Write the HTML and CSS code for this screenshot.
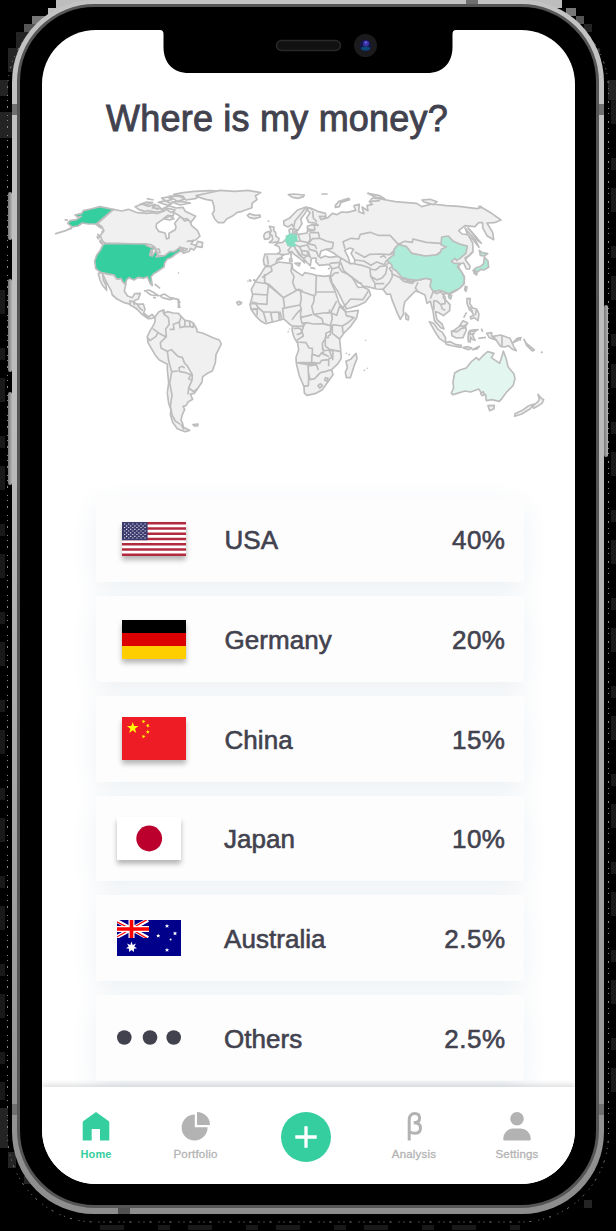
FILE: index.html
```html
<!DOCTYPE html>
<html lang="en">
<head>
<meta charset="utf-8">
<title>Where is my money?</title>
<link rel="stylesheet" href="styles.css">
</head>
<body>
<svg class="backdrop" viewBox="0 0 616 1231" aria-hidden="true">
  <g><path fill="#bdbdbd" d="M56 0h506v8H56zM48 8h20v8H48z"/><path d="M32 16h16v8H32zM566 8h10v8h-10z" fill="#777"/><path d="M24 24h16v8H24zM576 16h8v8h-8z" fill="#555"/></g>
  <path d="M16 32h16v16H16zM8 48h12v24H8zM0 80h8v16H0zM0 112h12v26H0zM584 24h8v8h-8zM592 48h8v20h-8zM608 80h8v20h-8zM0 1108h8v40H0zM8 1152h8v16H8zM24 1176h16v8H24zM584 1200h8v8h-8z" fill="#242424"/>
  <rect x="7.5" y="3" width="601" height="1219" rx="88" fill="none" stroke="#888" stroke-width="1" stroke-dasharray="1 4 1 7 2 5"/>
  <path d="M2.500 290V1100M613.500 100V1100M100 1227.500H520" stroke="#191919" stroke-width="5" stroke-dasharray="24 34 12 18"/>
</svg>
<div class="phone">
  <i class="button mute"></i><i class="button up"></i><i class="button down"></i><i class="button power"></i>
  <i class="antenna a1"></i><i class="antenna a2"></i><i class="antenna a3"></i><i class="antenna a4"></i><i class="antenna a5"></i><i class="antenna a6"></i>
  <div class="bezel">
    <main class="screen">
      <svg class="notch" viewBox="0 0 296 44" aria-hidden="true">
        <path d="M0 0H296Q292.500 0 292.500 4V17C292.500 33 283 43 267 43H29C13 43 3.500 33 3.500 17V4Q3.500 0 0 0Z"/>
        <rect x="116.500" y="10.500" width="64" height="10" rx="5" fill="#111" stroke="#292929" stroke-width="1.500"/>
        <circle cx="205.500" cy="15.500" r="11.500" fill="#1b1b1d"/><circle cx="205.500" cy="15.500" r="6" fill="#14164a"/>
        <ellipse cx="205.500" cy="18.500" rx="4.500" ry="2" fill="#0c4a78"/><circle cx="206" cy="13.500" r="3" fill="#3a34a8"/><circle cx="206" cy="12.500" r="1" fill="#7474dc"/>
      </svg>
      <h1>Where is my money?</h1>
      <svg class="map" viewBox="42 180 533 270" role="img" aria-label="World map">
        <!-- North America -->
        <g transform="translate(50 180) scale(.33333)">
          <path d="M190 88L215 93 235 88 262 98 290 100 312 98 320 101 340 94 350 88 362 97 371 94 370 108 353 106 340 117 320 131 318 142 326 154 345 159 350 177 357 174 357 160 376 149 378 140 374 130 391 109 404 123 418 119 425 137 442 151 450 168 437 180 412 184 432 181 423 192 438 196 443 184 458 188 456 202 438 199 432 210 421 205 418 214 400 220 390 204 372 215 344 228 322 225 315 205 290 192 165 190 156 181 151 166 160 155 154 139 140 133Z"/>
          <path class="hot" d="M190 88L150 80 122 87 100 92 95 100 75 105 83 111 94 109 79 119 60 122 53 130 67 141 84 138 97 129 115 132 137 132 154 145 148 134 139 132Z"/>
          <path d="M66 142L49 151 30 157 17 161 44 153 66 145M44 119L54 121M154 138L162 152 154 157M142 162L150 169 144 176 141 168M150 180L160 194 151 188Z"/>
          <path class="hot" d="M165 190L290 192 304 201 316 204 304 211 299 225 307 228 318 211 323 225 318 231 344 227 359 215 373 215 390 203 391 213 373 225 365 232 351 238 344 249 342 261 320 276 310 282 303 291 307 317 301 311 292 290 281 295 265 292 252 300 237 293 229 301 227 313 219 307 213 296 201 298 191 285 177 283 153 278 137 266 134 243 140 226 151 211 158 196Z"/>
          <path d="M288 196L302 193 314 201 302 202ZM303 211L308 208 305 226 300 226ZM317 208L327 207 330 218 322 218Z"/>
          <path d="M153 278L177 283 191 285 201 298 213 296 219 307 227 313 223 334 233 348 247 353 254 341 271 340 265 357 256 361 248 366 257 374 279 374 280 389 260 387 245 374 220 367 201 357 187 345 183 331 170 308 158 282 160 300 168 315 170 331 157 315 150 300 145 280Z"/>
          <path class="line" d="M282 333L297 330 315 340 326 347 303 345 289 335M330 347L343 342 360 353 373 355 359 359 337 353ZM309 352L318 354M363 354L383 358 391 369M314 312L324 320 330 325M384 278L387 280M371 355L386 359 385 384"/>
          <path d="M255 80L276 72 294 79 315 73 307 84 329 85 342 93 320 96 292 92 286 95 267 89ZM337 86L358 77 378 84 399 82 406 94 437 109 423 127 411 116 401 117 383 104 370 97 375 90 355 86ZM270 73L290 66 308 68 294 73ZM290 56L311 60M325 67L346 62 365 71 352 76ZM335 54L352 51 367 58 348 64ZM358 48L388 49 405 57 382 64ZM371 43L400 38 434 34 480 32 510 34 485 42 456 44 436 56 407 60 399 49ZM365 66L394 64 421 69 390 75ZM307 77L324 76 332 84 321 88ZM341 116L360 108 372 116 358 120ZM388 201L401 207 392 214 406 212 412 207Z"/>
          <path d="M438 47L475 39 510 31 555 34 594 31 632 38 616 47 621 59 606 70 606 83 576 94 562 97 546 109 531 116 521 128 505 128 494 117 487 101 493 92 492 79 487 62 467 58 451 53Z"/>
        </g>
        <!-- Central and South America -->
        <g transform="translate(130 300) scale(.33333)">
          <path d="M0 2L10 6 22 13 40 12 45 27 41 39 55 51 66 43 75 52 66 55 54 56 35 42 19 25 1 16Z"/>
          <path class="line" d="M10 6L14 16M21 12L29 24 39 32M144 0L150 24"/>
          <path d="M75 51L86 36 98 30 101 40 112 35 130 39 145 40 154 50 165 61 179 63 190 69 200 87 202 96 217 99 236 107 249 113 268 120 274 132 266 148 258 164 256 188 247 213 234 219 218 230 216 246 202 267 193 280 181 282 188 298 174 306 168 317 159 319 164 328 157 344 153 360 158 371 160 382 179 391 165 395 142 386 128 367 121 343 123 330 116 310 112 279 116 248 112 209 112 193 87 179 75 164 54 128 52 109 61 91 68 80 75 66Z"/>
          <path class="line" d="M68 86L84 97 78 109 60 122 53 113M102 28L102 42 115 53 118 73 107 87 109 110 91 128 93 144 111 154 124 149 144 169 157 172 164 190 171 196 187 224 186 241 176 236 183 224 167 218 149 215 147 203 157 199 164 204M112 154L116 183 125 215 145 213M125 217L119 249 126 285 121 319 127 347 136 363 151 373M186 241L176 263 190 275 202 267M176 264L174 283M154 49L148 66 130 73 132 88 119 88M165 61L164 80 150 83 148 66M178 63L181 80 164 80M190 69L190 82 181 80M153 373L162 389M84 98L107 110"/>
          <path d="M189 374L204 372 203 378 193 378ZM320 7L328 4 333 11 325 15Z"/>
        </g>
        <!-- Eurasia -->
        <g transform="translate(240 190) scale(.33333)">
          <path d="M75 192L112 192 121 184 117 170 105 165 113 159 128 157 141 145 139 139 150 136 147 120 153 115 159 119 158 131 175 133 201 129 203 119 202 109 216 104 235 106 225 99 206 97 200 83 210 69 202 59 193 73 182 87 186 101 174 121 164 118 156 103 144 111 132 105 131 93 148 85 173 60 198 51 218 57 233 64 256 70 258 80 238 79 243 89 264 83 277 70 291 74 304 66 321 67 347 61 342 47 358 43 356 65 372 71 366 51 384 62 381 47 397 43 388 35 397 24 422 27 466 35 492 37 530 40 545 50 575 42 620 47 657 49 711 56 724 52 755 70 783 90 763 98 741 99 758 127 761 149 741 137 728 113 728 98 716 98 705 110 675 107 656 122 666 132 684 134 698 159 699 185 683 200 676 209 690 228 689 237 679 237 671 219 662 221 655 230 673 260 673 280 652 300 630 312 612 310 610 323 630 344 629 362 610 377 598 369 586 365 591 389 606 402 612 417 602 413 583 391 579 363 571 334 561 340 555 315 538 307 526 303 513 316 494 336 490 357 491 371 481 388 471 367 456 329 451 312 440 313 429 298 410 297 381 290 371 289 350 272 337 263 354 292 369 291 386 299 392 315 375 337 353 347 320 357 308 335 292 302 276 278 271 257 276 235 267 223 238 226 228 216 228 204 214 205 211 227 202 219 185 199 168 178 176 193 190 205 194 219 178 204 163 193 155 184 144 192 128 194 125 202 112 207 107 223 95 229 86 228 73 225 70 210Z"/>
          <path class="sea" d="M238 200L243 183 258 178 269 183 281 189 293 199 269 202 255 198 242 204ZM314 181L330 174 341 178 333 190 344 209 344 221 330 221 325 202Z"/>
          <path class="line" d="M81 196L85 224M112 190L133 196M139 142L147 151 143 165 153 170 144 181 154 190M143 166L158 167 165 171 166 179M174 133L181 153 166 154M181 153L204 158 211 149 208 130M204 158L202 165 178 170 166 164M202 165L209 178 229 184 236 201M179 169L184 182 205 184 211 204M191 205L202 197 213 200M184 182L188 194 202 198 203 185M230 177L225 166 204 161 218 146 239 145 235 128 209 128M202 116L216 120 225 118 222 104M203 123L224 121M239 145L258 153 280 158 277 175 258 178M218 60L211 54 194 57 184 70 165 93 161 112M218 63L220 84 231 96M315 176L309 155 333 145 356 147 361 133 390 127 414 136 450 136 475 163 466 178 449 194 421 192 389 193 374 202 345 186M344 210L371 213 393 226 410 216 433 224 440 210M293 199L313 210 330 221M269 220L300 217 302 205M300 217L296 231 276 237M302 218L312 243 338 263M296 231L306 245 324 253 336 263M274 260L284 249 297 248M344 222L370 227 390 234 392 259 405 280 405 297M390 237L407 240 420 229 436 228 446 218M392 259L411 270 426 264 437 251 442 228M405 280L433 281M429 298L449 276 457 260 455 240M457 252L480 263 510 274 532 271M481 265L491 274 517 280 524 274M534 277L526 294 534 304M538 271L556 264 574 268 574 289 580 304 571 326M580 304L589 311 602 305 616 322 615 341 602 343 590 333 580 332M602 343L607 357 616 361M581 333L582 359M457 229L448 235 454 245M309 353L332 327 369 329 386 301M475 163L494 154 517 157 519 147 559 157 603 160 613 164M515 190L555 198 589 195 620 172M673 205L688 197 699 185"/>
          <path class="line" d="M337 263L354 278 366 280M451 193L463 188M420 202L431 197 438 204"/>
          <path class="mid" d="M143 137L153 132 161 136 168 135 171 151 160 157 166 166 151 168 142 161 137 151Z"/>
          <path class="cn" d="M475 163L500 170 515 190 555 198 590 195 602 186 604 178 619 171 603 164 605 141 625 138 640 154 665 164 682 168 678 190 660 205 650 212 645 205 634 214 643 220 659 220 652 230 665 246 673 263 672 281 659 295 638 305 627 311 612 305 598 301 580 305 570 289 574 269 558 265 530 271 508 268 485 262 469 243 457 235 455 224 440 211 455 199 462 194 462 178Z"/>
          <path d="M88 109L102 111 101 121 107 128 108 139 117 145 115 155 99 158 88 157 98 149 96 136 89 131 94 123ZM75 129L87 124 91 136 87 146 74 148 71 138ZM28 71L45 76 60 75 61 81 44 86 29 83 22 76ZM83 93L88 94M165 220L181 219 177 228ZM149 206L155 204 156 214 149 215ZM150 193L154 192 153 202M211 233L226 236M264 237L271 234M112 211L129 205M145 14L162 12 193 15 190 20 174 25 157 22ZM244 12L263 12M286 46L297 34 326 25 329 29 303 37 298 50 286 52ZM383 10L419 17 434 26 410 23ZM546 30L570 28 591 35 580 44 552 36ZM715 49L726 50M392 34L420 32M164 124L170 122 171 129 163 131Z"/>
          <path d="M675 113L690 132 706 149 717 172 700 150 683 134Z"/>
          <path d="M684 113L710 143 724 160 713 151Z"/>
          <path class="cn" d="M718 181L727 188 743 191 733 198 721 196ZM733 201L744 213 746 232 731 240 722 238 714 245 705 247 699 242 707 234 722 229 731 221ZM702 242L712 245 710 255 702 250ZM626 314L635 316 632 327 626 323Z"/>
          <path d="M676 289L681 291 678 304 674 299ZM496 369L506 380 505 390 498 387ZM28 268L33 274M40 268L48 273M26 273L22 274M52 269L57 268"/>
        </g>
        <!-- Africa -->
        <g transform="translate(240 270) scale(.33333)">
          <path d="M76 -10L92 -11 117 -24 156 -19 158 -3 172 7 187 17 194 8 215 12 229 16 254 19 268 17 271 32 286 65 298 101 315 120 318 126 355 121 350 143 332 169 312 189 299 207 302 240 304 264 294 281 275 299 279 314 264 335 246 360 225 371 201 376 193 369 192 350 178 318 169 281 168 262 176 240 173 220 162 202 156 180 158 169 148 162 131 147 110 153 77 161 62 153 49 140 34 119 30 104 38 75 34 58 45 37 63 11Z"/>
          <path class="line" d="M36 72L82 75 86 42 46 36M82 75L81 103 54 101 36 96M86 42L130 83 134 116M93 -10L96 3 66 22M74 12L74 36 130 83 176 58 188 62M156 -19L153 4 162 19 158 37 166 57 181 63 217 76 227 75 229 16M229 66L286 66M223 76L221 97 215 109 221 133 250 129 272 128 284 105 290 93M181 63L184 85 180 106 184 117 181 132M180 105L128 115 131 146M183 118L172 128 156 149M30 102L46 100 56 114 70 126 79 157M31 117L52 118 51 137M56 114L39 119M70 126L92 126 97 155M95 127L116 126 118 153M120 125L125 150M181 132L184 142 217 134M181 139L186 160 200 158 220 162 250 161 246 146 221 133M158 168L185 169 200 158M161 176L175 174 185 179 183 190 170 194M193 162L186 184 190 198 170 211 172 216 198 218 207 234 217 235 217 253 237 259 245 248 267 260M250 161L273 168 271 185 258 191 256 207 256 228 269 238 302 245M250 161L271 167 277 145 274 129M272 128L290 136 299 108 310 117M298 108L316 124 319 137 342 143 321 160 307 168 277 164M307 168L309 189M277 164L277 190 299 207M256 205L247 220 248 240M176 278L215 278 216 254M168 278L204 284 206 323M205 305L210 329 224 326 241 308 255 305 275 299M207 288L229 284 235 300M216 252L215 277 239 280 245 271 266 269 266 289M203 283L228 280M250 234L250 256M206 323L205 347 191 349M248 243L267 240 276 262 265 268M256 323L264 325 261 334 254 330ZM234 347L241 341 247 347 239 354ZM268 239L279 244 278 271"/>
          <path d="M348 250L351 266 344 283 331 323 319 323 316 307 322 293 318 274 332 268ZM318 248L320 251M326 252L329 256M376 210L378 212M372 299L374 302M381 294L383 296M143 184L146 186M148 176L149 178M0 95L5 98 1 102M28 29L33 35M39 30L48 34"/>
          <path class="sea" d="M258 190L272 184 271 195 265 196 265 203 258 202Z"/>
          <path class="line" d="M268 126L269 118M38 116L47 118"/>
        </g>
        <!-- South-east Asia and Oceania -->
        <g transform="translate(420 290) scale(.33333)">
          <path d="M28 95L41 100 55 119 67 127 77 144 76 157 59 146 45 125ZM76 158L91 155 108 164 124 166 123 172 99 168 79 163ZM129 173L143 170 155 174 145 179ZM157 179L178 169 171 177ZM94 124L104 120 117 110 129 92 143 99 136 110 139 120 129 143 109 144 96 137ZM146 126L151 121 174 119 166 124 151 124 149 134 163 130 158 136 165 151 156 148 151 141 151 156 145 155 144 139ZM184 116L188 126M175 145L198 142M200 130L215 128 215 138 228 149 219 139 243 135 270 145 276 158 281 169 289 182 276 177 265 167 254 171 241 169 229 151 208 143ZM279 158L294 151 303 143 292 145ZM312 148L319 160 343 180 337 183 320 166ZM363 185L368 188M141 25L151 26 149 40 158 54 170 57 177 72 174 92 163 83 153 87 151 80 162 76 154 63 148 59 141 39Z"/>
          <path class="line" d="M97 124L112 125 123 116 139 112M118 106L130 109 139 104M246 137L246 168M292 145L303 151M140 67L131 83M149 50L158 65M169 60L166 75"/>
          <path class="au" d="M193 193L203 185 222 190 214 203 239 220 246 199 250 183 259 208 264 230 282 252 285 266 279 287 260 306 246 325 238 334 216 329 199 332 197 314 184 308 176 297 152 306 135 303 112 310 98 314 94 309 101 294 99 276 104 249 119 240 139 234 155 214 169 203 177 210Z"/>
          <path d="M204 347L223 346 222 356 209 362ZM354 313L363 324 371 329 366 340 355 347 341 355 338 348 354 335 358 327ZM342 342L331 356 305 372 284 379 285 371 307 361 325 348ZM182 311L190 305 193 314 187 317Z"/>
        </g>
      </svg>
      <section class="list">
        <article class="card"><svg class="flag shadow" viewBox="0 0 64 34" height="34"><path fill="#fff" d="M0 0h64v34H0z"/><path d="M0 1.300H64M0 6.530H64M0 11.760H64M0 17H64M0 22.240H64M0 27.470H64M0 32.700H64" stroke="#b22a3e" stroke-width="2.600"/><path fill="#3c3b6e" d="M0 0h25.600v18.200H0z"/><path d="M2 2H25M2 5.500H25M2 9H25M2 12.500H25M2 16H25" stroke="#dedeea" stroke-width="1.200" stroke-dasharray="1.200 2.900"/><path d="M4 3.800H24M4 7.300H24M4 10.800H24M4 14.300H24" stroke="#dedeea" stroke-width="1.200" stroke-dasharray="1.200 2.900"/></svg><span>USA</span><b>40%</b></article>
        <article class="card"><svg class="flag shadow" viewBox="0 0 64 39" height="39"><path d="M0 0h64v13H0z"/><path fill="#d00" d="M0 13h64v13H0z"/><path fill="#ffce00" d="M0 26h64v13H0z"/></svg><span>Germany</span><b>20%</b></article>
        <article class="card"><svg class="flag shadow" viewBox="0 0 64 43" height="43"><defs><path id="star" d="M0-6L1.400-1.900 5.700-1.900 2.300.700 3.500 4.900 0 2.300-3.500 4.900-2.300.700-5.700-1.900-1.400-1.900Z"/></defs><path fill="#ee1c25" d="M0 0h64v43H0z"/><g fill="#ff0"><use href="#star" x="10.700" y="11"/><use href="#star" transform="translate(21.500 4.500) rotate(20) scale(.36)"/><use href="#star" transform="translate(25.800 8.700) rotate(45) scale(.36)"/><use href="#star" transform="translate(25.800 15) scale(.36)"/><use href="#star" transform="translate(21.500 19.500) rotate(20) scale(.36)"/></g></svg><span>China</span><b>15%</b></article>
        <article class="card wide"><svg class="flag shadow" viewBox="0 0 64 43" height="43"><path fill="#fff" d="M0 0h64v43H0z"/><circle cx="32.200" cy="21.500" r="12.900" fill="#bc002d"/></svg><span>Japan</span><b>10%</b></article>
        <article class="card wide"><svg class="flag" viewBox="0 0 64 36" height="36"><defs><clipPath id="jack"><path d="M0 0h32v18H0z"/></clipPath><path id="pip" d="M0-2L.600-.800 2-.800 1 .300 1.500 1.800 0 1-1.500 1.800-1 .300-2-.800-.600-.800Z"/></defs><path fill="#00008b" d="M0 0h64v36H0z"/><g clip-path="url(#jack)"><path d="M-2 0L31 18M-2 18L31 0" stroke="#fff" stroke-width="4"/><path d="M-2 1L14 9 31 19M-2 18L14 9 31-1" fill="none" stroke="#f00" stroke-width="1.300"/><path d="M14.500 0V18M0 9H32" stroke="#fff" stroke-width="6"/><path d="M14.500 0V18M0 9H32" stroke="#f00" stroke-width="3.600"/></g><g fill="#fff"><path d="M14.500 21.500L15.700 24.900 19 23.500 17.300 26.500 20 28.300 16.900 28.800 17 32 14.500 29.900 12 32 12.100 28.800 9 28.300 11.700 26.500 10 23.500 13.300 24.900Z"/><use href="#pip" x="50" y="6"/><use href="#pip" x="41.200" y="15.700"/><use href="#pip" x="58" y="13.400"/><use href="#pip" x="50" y="30"/><circle cx="53.600" cy="19.500" r="1"/></g></svg><span>Australia</span><b>2.5%</b></article>
        <article class="card wide"><svg class="flag" viewBox="0 0 64 15" height="15" fill="#42424f"><circle cx="7.300" cy="7.500" r="7.300"/><circle cx="33" cy="7.500" r="7.300"/><circle cx="56.700" cy="7.500" r="7.300"/></svg><span>Others</span><b>2.5%</b></article>
      </section>
      <nav>
        <a class="active"><svg width="28" height="29" viewBox="0 0 28 29"><path d="M14 0L26.500 9Q27.300 9.600 27.300 10.500V28.500H18V17H9.700V28.500H.700V10.500Q.700 9.600 1.500 9Z"/></svg>Home</a>
        <a><svg width="29" height="29" viewBox="0 0 29 29"><path d="M13.800 2.500A13 13 0 1 0 26.600 15.300H13.800Z"/><path d="M16 0A13 13 0 0 1 29 13H16Z"/></svg>Portfolio</a>
        <a class="add" aria-label="Add"><svg width="50" height="50" viewBox="0 0 50 50"><circle cx="25" cy="25" r="25"/><path d="M14.300 25H35.700M25 14.300V35.700" stroke="#fff" stroke-width="3.300"/></svg></a>
        <a><svg width="16" height="29" viewBox="0 0 16 29"><path d="M3.200 28.500V8C3.200 4 5.300 1.600 8.700 1.600C12 1.600 13.600 3.400 13.600 6.200C13.600 9.200 11.400 10.700 7.700 10.700C12.200 10.700 14.500 12.700 14.500 15.900C14.500 19.300 12.300 21.200 8.700 21.200C6.300 21.200 4.300 20.400 3.200 19.200" fill="none" stroke="#b3b3b3" stroke-width="3"/></svg>Analysis</a>
        <a><svg width="28" height="29" viewBox="0 0 28 29"><circle cx="14" cy="6.800" r="6.800"/><path d="M.300 27.500V26.500A10 10 0 0 1 10.300 16.500H17.700A10 10 0 0 1 27.700 26.500V27.500Q27.700 28.500 26.700 28.500H1.300Q.300 28.500 .300 27.500Z"/></svg>Settings</a>
      </nav>
    </main>
  </div>
</div>
</body>
</html>
```
FILE: styles.css
```css
* { box-sizing: border-box; }
body {
  margin: 0;
  height: 1231px;
  overflow: hidden;
  background: #000;
  color: #42424f;
  font-family: "Liberation Sans", Arial, sans-serif;
}
.backdrop { position: absolute; inset: 0; width: 616px; height: 1231px; }
.phone {
  position: relative;
  width: 592px;
  height: 1214px;
  margin-left: 12px;
  padding: 4px 5px 6px;
  border-radius: 82px;
  background: linear-gradient(#c3c3c3, #bcbcbc 35%, #8d8d8d);
}
.bezel {
  height: 1204px;
  padding: 22.5px 22px 21px;
  border: 3px solid #555;
  border-radius: 78px;
  background: #000;
}
.screen {
  display: flex;
  flex-direction: column;
  width: 533px;
  height: 1154.5px;
  overflow: hidden;
  border-radius: 54px;
  background: #fff;
}
.notch { flex: none; width: 296px; height: 44px; margin-left: 118px; }
h1 {
  height: 40px;
  margin: 25px 0 0 64px;
  font-size: 36px;
  line-height: 40px;
  font-weight: 400;
  letter-spacing: .22px;
  -webkit-text-stroke: .9px currentColor;
  white-space: nowrap;
}
.map { flex: none; width: 533px; height: 270px; margin-top: 41.500px; }
.map path { fill: #f0f0f0; stroke: #bdbdbd; stroke-width: 5; stroke-linejoin: round; }
.map .line { fill: none; }
.map .sea { fill: #fff; }
.map .hot { fill: #35ce9e; }
.map .mid { fill: #82dfc1; stroke: #82dfc1; }
.map .cn { fill: #aeebd8; }
.map .au { fill: #e3f7f0; }
.list {
  display: flex;
  flex: 1;
  flex-direction: column;
  gap: 14px;
  min-height: 0;
  padding: 46.500px 51px 0 54px;
  overflow: hidden;
}
.card {
  display: grid;
  grid-template-columns: 103px 1fr auto;
  align-items: center;
  flex: none;
  height: 85.700px;
  padding: 0 18.500px 0 25.500px;
  background: #fdfdfd;
  box-shadow: 0 8px 24px rgba(180, 195, 208, .24);
  font-size: 26px;
  letter-spacing: .05px;
  -webkit-text-stroke: .6px currentColor;
}
.card.wide { grid-template-columns: 107px 1fr auto; padding-left: 21px; }
.card span, .card b { padding-top: 3px; font-weight: 400; }
.card b { letter-spacing: .5px; }
.flag { display: block; width: 64px; }
.shadow { box-shadow: 0 4px 5px rgba(0, 0, 0, .28); }
nav {
  position: relative;
  display: grid;
  grid-template-columns: 108px 91px 130px 86px 120px;
  flex: none;
  height: 97px;
  background: #fff;
  box-shadow: 0 -2px 6px rgba(40, 50, 60, .18);
}
nav a {
  display: flex;
  flex-direction: column;
  align-items: center;
  gap: 5.500px;
  padding-top: 25px;
  color: #b3b3b3;
  font-size: 11.500px;
  line-height: 14px;
  letter-spacing: .2px;
  -webkit-text-stroke: .3px currentColor;
}
nav svg { display: block; fill: currentColor; stroke: none; }
nav .active, nav .add { color: #35ce9e; }
nav .active { font-size: 11px; font-weight: 700; letter-spacing: .1px; -webkit-text-stroke: 0; }
.button { position: absolute; left: -4px; width: 4px; border-radius: 2px; background: linear-gradient(90deg, #777, #b5b5b5); }
.mute { top: 192px; height: 48px; }
.up { top: 279px; height: 93px; }
.down { top: 392px; height: 93px; }
.power { left: 592px; top: 305px; height: 152px; }
.antenna { position: absolute; width: 5px; height: 11px; background: #707070; }
.a1 { left: 0; top: 104px; }
.a2 { right: 0; top: 104px; }
.a3 { left: 0; top: 1104px; }
.a4 { right: 0; top: 1104px; }
.a5 { left: 454px; top: 0; width: 12px; height: 4px; }
.a6 { left: 106px; top: 1208px; width: 12px; height: 6px; background: #505050; }
```
